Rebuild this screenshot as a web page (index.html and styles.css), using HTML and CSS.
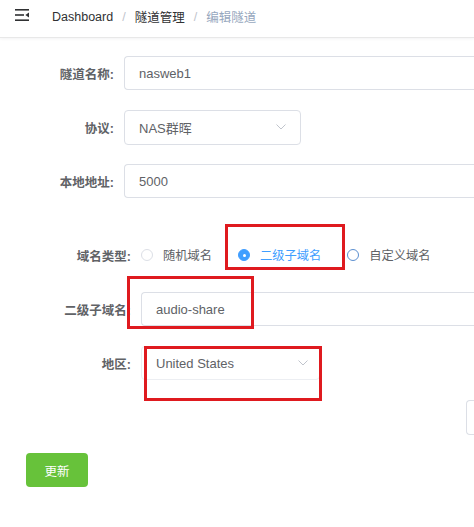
FILE: index.html
```html
<!DOCTYPE html>
<html>
<head>
    <title>编辑隧道</title>
    <link rel="stylesheet" href="styles.css">
</head>
<body>
    <!-- Top bar -->
    <div class="navbar">
        <svg class="hamburger" width="14" height="12" viewBox="0 0 14 12">
            <rect x="0" y="0" width="14" height="1.6" fill="#303133"/>
            <rect x="0" y="5.2" width="9" height="1.6" fill="#303133"/>
            <polygon points="14,3.4 14,8.6 10.4,6" fill="#303133"/>
            <rect x="0" y="10.4" width="14" height="1.6" fill="#303133"/>
        </svg>
        <div class="breadcrumb">
            <span class="crumb">Dashboard</span>
            <span class="sep">/</span>
            <span class="crumb">隧道管理</span>
            <span class="sep">/</span>
            <span class="crumb current">编辑隧道</span>
        </div>
    </div>

    <!-- Tunnel basics -->
    <form class="tunnel-form">
        <div class="form-row">
            <label class="row-label">隧道名称:</label>
            <div class="input wide">nasweb1</div>
        </div>
        <div class="form-row">
            <label class="row-label">协议:</label>
            <div class="input select protocol">
                <span>NAS群晖</span>
                <svg class="arrow" width="10" height="6" viewBox="0 0 10 6"><polyline points="0.5,0.5 5,5 9.5,0.5" fill="none" stroke="#c0c4cc" stroke-width="1"/></svg>
            </div>
        </div>
        <div class="form-row">
            <label class="row-label">本地地址:</label>
            <div class="input wide">5000</div>
        </div>
    </form>

    <!-- Domain settings -->
    <form class="domain-form">
        <div class="form-row">
            <label class="row-label">域名类型:</label>
            <div class="radio-group">
                <span class="radio"><span class="dot"></span>随机域名</span>
                <span class="radio checked"><span class="dot"></span>二级子域名</span>
                <span class="radio hover"><span class="dot"></span>自定义域名</span>
            </div>
            <div class="mark mark-type"></div>
        </div>
        <div class="form-row">
            <label class="row-label">二级子域名:</label>
            <div class="input wide">audio-share</div>
            <div class="mark mark-sub"></div>
        </div>
        <div class="form-row">
            <label class="row-label">地区:</label>
            <div class="input select region">
                <span>United States</span>
                <svg class="arrow" width="10" height="6" viewBox="0 0 10 6"><polyline points="0.5,0.5 5,5 9.5,0.5" fill="none" stroke="#c0c4cc" stroke-width="1"/></svg>
            </div>
            <div class="mark mark-region"></div>
        </div>
        <div class="form-row">
            <div class="side-box"></div>
        </div>
    </form>

    <div class="actions">
        <button type="button" class="btn-update">更新</button>
    </div>
</body>
</html>
```

FILE: styles.css
```css
html, body {
    overflow: hidden;
}

body {
    margin: 0;
    background-color: #fff;
    font-family: "Liberation Sans", "Noto Sans CJK SC", sans-serif;
    font-size: 12.5px;
    color: #606266;
}

/* top bar */
.navbar {
    height: 33px;
    padding-bottom: 4px;
    display: flex;
    align-items: center;
    border-bottom: 1px solid #e8e8e8;
    box-shadow: 0 1px 3px rgba(0, 21, 41, 0.05);
}

.hamburger {
    margin-left: 15px;
    margin-top: -3px;
}

.breadcrumb {
    margin-left: 23px;
    display: flex;
    align-items: center;
}

.crumb {
    color: #303133;
}

.crumb.current {
    color: #97a8be;
}

.sep {
    color: #c0c4cc;
    margin: 0 9px;
}

/* forms */
.tunnel-form {
    padding-top: 18px;
}

.domain-form {
    margin-top: 40px;
}

.form-row {
    position: relative;
    display: flex;
    align-items: center;
    height: 34px;
    margin-bottom: 20px;
}

.row-label {
    flex: none;
    box-sizing: border-box;
    padding-right: 10px;
    text-align: right;
    font-weight: bold;
    color: #606266;
}

.tunnel-form .row-label {
    width: 124px;
}

.domain-form .row-label {
    width: 141px;
}

.input {
    flex: none;
    box-sizing: border-box;
    height: 34px;
    padding: 0 14px;
    display: flex;
    align-items: center;
    border: 1px solid #dcdfe6;
    border-radius: 4px;
    font-size: 13px;
}

/* long inputs run to the window edge */
.input.wide {
    flex: 1;
    min-width: 0;
    border-right: none;
    border-radius: 4px 0 0 4px;
}

.select {
    justify-content: space-between;
}

.protocol {
    width: 177px;
    height: 35px;
}

.region {
    width: 179px;
    padding-right: 11px;
    border-color: #eceef2;
}

/* radios */
.radio-group {
    display: flex;
    align-items: center;
}

.radio {
    display: flex;
    align-items: center;
    margin-right: 26px;
    font-size: 12.25px;
    color: #606266;
}

.radio .dot {
    box-sizing: border-box;
    width: 12px;
    height: 12px;
    margin-right: 10px;
    border: 1px solid #dcdfe6;
    border-radius: 50%;
    position: relative;
}

.radio.checked {
    color: #409eff;
}

.radio.checked .dot {
    background-color: #409eff;
    border-color: #409eff;
}

.radio.checked .dot::after {
    content: "";
    position: absolute;
    left: 3.5px;
    top: 3.5px;
    width: 3px;
    height: 3px;
    border-radius: 50%;
    background-color: #fff;
}

.radio.hover .dot {
    border-color: #5b8fd0;
}

/* red marker frames */
.mark {
    position: absolute;
    box-sizing: border-box;
    border: 3px solid #df1a1f;
}

.mark-type {
    left: 225px;
    top: -14px;
    width: 120px;
    height: 46px;
}

.mark-sub {
    left: 127px;
    top: -16px;
    width: 127px;
    height: 53px;
}

.mark-region {
    left: 144px;
    top: 0;
    width: 178px;
    height: 55px;
}

.side-box {
    margin-left: 466px;
    flex: 1;
    height: 35px;
    box-sizing: border-box;
    border: 1px solid #dcdfe6;
    border-right: none;
    border-radius: 4px 0 0 4px;
}

/* submit */
.actions {
    padding-left: 26px;
    margin-top: -1px;
}

.btn-update {
    width: 62px;
    height: 34px;
    border: none;
    border-radius: 4px;
    background-color: #67c23a;
    color: #fff;
    font-family: inherit;
    font-size: 12.5px;
    cursor: pointer;
}
```
